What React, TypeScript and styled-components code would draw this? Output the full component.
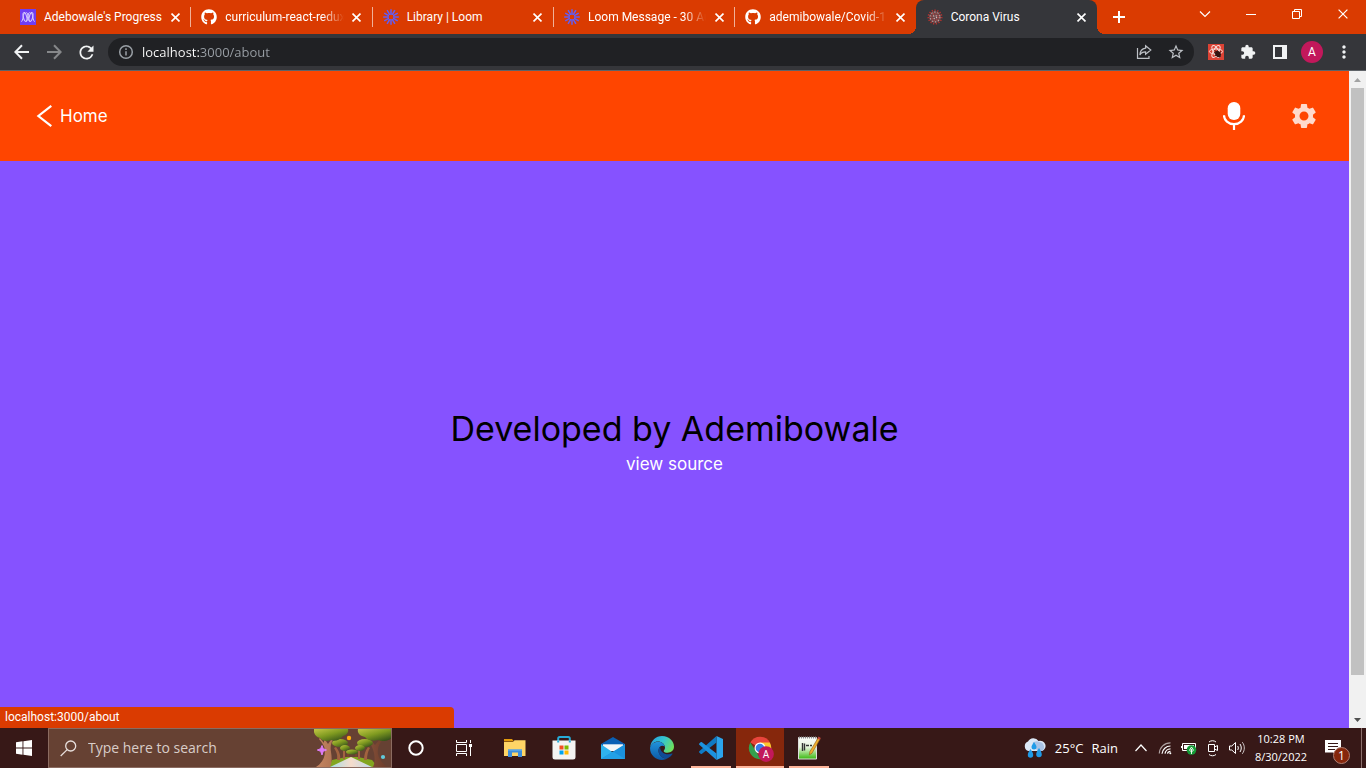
import React from "react";
import styled, { createGlobalStyle, css } from "styled-components";
import { FaGithub } from "react-icons/fa";
import { MdExtension, MdSettings, MdRefresh, MdStarBorder, MdMoreVert } from "react-icons/md";

const ui = `"Open Sans", "Noto Sans", sans-serif`;
const compactUi = `Roboto, "Open Sans", sans-serif`;

const GlobalStyle = createGlobalStyle`
  *, *::before, *::after { box-sizing: border-box; }
  body { margin: 0; font-family: ${ui}; font-size: 12px; }
  button, input { font: inherit; color: inherit; }
  button { padding: 0; border: 0; background: none; cursor: pointer; }
  h1, p { margin: 0; }
  svg { display: block; flex: none; }
`;

const Desktop = styled.div`
  display: flex;
  flex-direction: column;
  min-height: 100vh;
  overflow: hidden;
`;

/* ---------- Browser chrome ---------- */

const TabStrip = styled.header`
  display: flex;
  height: 34px;
  padding-left: 9px;
  background: #da3b01;
  color: #fff;
  font-family: ${compactUi};
`;

const TabList = styled.div`
  display: flex;
  flex: 0 1 1088px;
  min-width: 0;
`;

const Tab = styled.div<{ $active?: boolean; $divided?: boolean }>`
  position: relative;
  display: flex;
  flex: 1 1 0;
  align-items: center;
  min-width: 0;
  padding: 0 7px 0 11px;

  ${(p) =>
    p.$divided &&
    css`
      &::after {
        content: "";
        position: absolute;
        right: -1px;
        top: 7px;
        width: 1px;
        height: 20px;
        background: #f0b199;
      }
    `}

  ${(p) =>
    p.$active &&
    css`
      background: #35363a;
      border-radius: 8px 8px 0 0;

      &::before,
      &::after {
        content: "";
        position: absolute;
        bottom: 0;
        width: 8px;
        height: 8px;
      }
      &::before {
        left: -8px;
        background: radial-gradient(circle at 0 0, transparent 8px, #35363a 8px);
      }
      &::after {
        right: -8px;
        background: radial-gradient(circle at 100% 0, transparent 8px, #35363a 8px);
      }
    `}
`;

const TabButton = styled.button`
  display: flex;
  flex: 1;
  align-items: center;
  gap: 8px;
  min-width: 0;
  margin-right: 5px;
  text-align: left;
`;

const TabTitle = styled.span<{ $fade?: boolean }>`
  flex: 1;
  overflow: hidden;
  line-height: 18px;
  white-space: nowrap;
  ${(p) => p.$fade && "mask-image: linear-gradient(to left, transparent, #000 22px);"}
`;

const IconButton = styled.button<{ $size?: number }>`
  display: grid;
  place-items: center;
  flex: none;
  width: ${(p) => p.$size ?? 32}px;
  height: ${(p) => p.$size ?? 32}px;
`;

const NewTab = styled(IconButton)`
  align-self: center;
  margin-left: 6px;
`;

const WindowControls = styled.div`
  display: flex;
  margin-left: auto;
`;

const WindowButton = styled.button`
  display: grid;
  place-items: center;
  width: 46px;
  height: 28px;
`;

const Toolbar = styled.div`
  display: flex;
  align-items: center;
  height: 37px;
  padding: 0 6px;
  border-bottom: 1px solid #5f6368;
  background: #35363a;
  color: #f1f3f4;
`;

const Omnibox = styled.label`
  display: flex;
  flex: 1;
  align-items: center;
  height: 28px;
  margin: 0 6px;
  padding: 0 2px 0 10px;
  border-radius: 14px;
  background: #202124;
  color: #bdc1c6;
`;

const AddressInput = styled.input`
  flex: 1;
  min-width: 0;
  margin-left: 8px;
  padding: 0;
  border: 0;
  outline: 0;
  background: linear-gradient(to right, #fff 58px, #9aa0a6 58px);
  background-clip: text;
  color: #9aa0a6;
  font-size: 13px;
  line-height: 20px;
  -webkit-text-fill-color: transparent;
`;

const Avatar = styled.span`
  display: grid;
  place-items: center;
  width: 22px;
  height: 22px;
  border-radius: 50%;
  background: #c2185b;
  color: #fff;
  font-family: Roboto, sans-serif;
  font-size: 12px;
`;

/* ---------- Web page ---------- */

const Viewport = styled.div`
  position: relative;
  display: flex;
  flex: 1;
`;

const Page = styled.div`
  display: flex;
  flex: 1;
  flex-direction: column;
  background: #8652ff;
  font-family: Inter, sans-serif;
`;

const PageHeader = styled.header`
  display: flex;
  align-items: center;
  justify-content: space-between;
  height: 90px;
  padding: 0 30px 0 36px;
  background: #ff4500;
  color: #fff;
`;

const HomeLink = styled.a`
  display: flex;
  align-items: center;
  gap: 8px;
  color: inherit;
  font-size: 17px;
  line-height: 24px;
  text-decoration: none;
`;

const HeaderActions = styled.div`
  display: flex;
  align-items: center;
  gap: 40px;
`;

const About = styled.main`
  display: flex;
  flex: 1;
  flex-direction: column;
  align-items: center;
  justify-content: center;
  padding-bottom: 6px;
`;

const Title = styled.h1`
  font-size: 34px;
  font-weight: 400;
  line-height: 44px;
  color: #000;
`;

const SourceLink = styled.a`
  color: #fff;
  font-size: 17px;
  line-height: 26px;
  text-decoration: none;
`;

const StatusBubble = styled.p`
  position: absolute;
  left: 0;
  bottom: 0;
  width: 454px;
  padding: 0 5px;
  border-radius: 0 4px 0 0;
  background: #da3b01;
  color: #fff;
  font-family: ${compactUi};
  line-height: 21px;
`;

const Scrollbar = styled.div`
  display: flex;
  flex-direction: column;
  width: 17px;
  padding: 0 2px;
  background: #f1f1f1;
`;

const ScrollArrow = styled.span<{ $down?: boolean }>`
  display: grid;
  place-items: center;
  height: 17px;
  color: ${(p) => (p.$down ? "#505050" : "#a3a3a3")};
`;

const ScrollThumb = styled.div`
  flex: 587;
  background: #c1c1c1;
`;

const ScrollRest = styled.div`
  flex: 36;
`;

/* ---------- Taskbar ---------- */

const Taskbar = styled.footer`
  display: flex;
  height: 40px;
  background: #371817;
  color: #fff;
`;

const TaskButton = styled.button<{ $state?: "open" | "active" }>`
  position: relative;
  display: grid;
  place-items: center;
  flex: none;
  width: 48px;
  height: 40px;
  background: ${(p) => (p.$state === "active" ? "#86270c" : "none")};

  ${(p) =>
    p.$state &&
    css`
      &::after {
        content: "";
        position: absolute;
        bottom: 0;
        left: ${p.$state === "active" ? 0 : 4}px;
        right: ${p.$state === "active" ? 0 : 4}px;
        height: 2px;
        background: #ffb59b;
      }
    `}
`;

const SearchBox = styled.label`
  display: flex;
  flex: 0 1 344px;
  align-items: center;
  min-width: 0;
  padding-left: 11px;
  border: 1px solid #8b6b60;
  background: #664133;
`;

const SearchInput = styled.input`
  flex: 1;
  min-width: 0;
  margin-left: 11px;
  padding: 0;
  border: 0;
  outline: 0;
  background: none;
  font-size: 14px;
  line-height: 20px;
  &::placeholder { color: #d9cdc9; opacity: 1; }
`;

const PinnedApps = styled.nav`
  display: flex;
  gap: 1px;
  margin-left: 3px;
`;

const Tray = styled.div`
  display: flex;
  align-items: center;
  margin-left: auto;
`;

const Weather = styled.button`
  display: flex;
  align-items: center;
  gap: 8px;
  margin-right: 11px;
  font-size: 13px;
  line-height: 20px;
`;

const TrayButton = styled.button`
  display: grid;
  place-items: center;
  width: 24px;
  height: 40px;
`;

const Clock = styled.button`
  width: 64px;
  font-size: 11px;
  line-height: 18px;
  text-align: center;
`;

const Notifications = styled.button`
  position: relative;
  display: grid;
  place-items: center;
  width: 40px;
  height: 40px;
`;

const Badge = styled.span`
  position: absolute;
  left: 20px;
  top: 19px;
  width: 17px;
  height: 17px;
  border: 1px solid #b08074;
  border-radius: 50%;
  background: #86270c;
  font-size: 12px;
  line-height: 15px;
  text-align: center;
`;

const ShowDesktop = styled.button`
  width: 5px;
  height: 40px;
  margin-left: 8px;
  border-left: 1px solid #8b6f6c;
`;

/* ---------- Drawings ---------- */

const Cross = ({ size = 9, weight = 1.8 }: { size?: number; weight?: number }) => (
  <svg width={size} height={size} viewBox="0 0 10 10" stroke="currentColor" strokeWidth={weight} fill="none">
    <path d="M.6.6 9.4 9.4M9.4.6.6 9.4" />
  </svg>
);

const MicroverseIcon = () => (
  <svg width="16" height="16" viewBox="0 0 16 16">
    <rect width="16" height="16" fill="#6f3df4" />
    <g fill="none" stroke="#d8ccff" strokeWidth="1">
      <ellipse cx="5" cy="8" rx="1.700" ry="4.500" transform="rotate(-14 5 8)" />
      <ellipse cx="11" cy="8" rx="1.700" ry="4.500" transform="rotate(14 11 8)" />
      <path d="M1.300 12.500C3.200 12.800 3 3.500 5 3.500M14.700 12.500C12.800 12.800 13 3.500 11 3.500M6 12.500C8 12 7.500 3.500 9.600 3.500M10 12.500C8 12 8.500 3.500 6.400 3.500" />
    </g>
  </svg>
);

const LoomIcon = () => (
  <svg width="16" height="16" viewBox="0 0 16 16" stroke="#625df5" strokeWidth="1.5">
    {[0, 30, 60, 90, 120, 150, 180, 210, 240, 270, 300, 330].map((a) => (
      <path key={a} d="M8 .2V5.400" transform={`rotate(${a} 8 8)`} />
    ))}
    <circle cx="8" cy="8" r="3" fill="none" strokeWidth="1" />
  </svg>
);

const VirusIcon = () => (
  <svg width="16" height="16" viewBox="0 0 16 16">
    <circle cx="8" cy="8" r="6" fill="#6d4547" />
    <circle cx="8" cy="8" r="6.700" fill="none" stroke="#b3322f" strokeWidth="1.600" strokeDasharray="1.300 1.500" />
    <circle cx="8" cy="8" r="4.900" fill="none" stroke="#b9a3a3" strokeWidth="1.100" strokeDasharray="1.400 1.700" />
    <circle cx="8" cy="8" r="3.300" fill="none" stroke="#c04642" strokeWidth="1.100" strokeDasharray="1.100 1.500" />
    <circle cx="8" cy="8" r="1.600" fill="none" stroke="#d0bcbc" strokeWidth="1.200" strokeDasharray="1 1.500" />
  </svg>
);

const ArrowIcon = ({ flip }: { flip?: boolean }) => (
  <svg width="16" height="16" viewBox="0 0 16 16" fill="none" stroke={flip ? "#86888a" : "#f1f3f4"} strokeWidth="2">
    <path d={flip ? "M1 8h13M8 1.300 14.600 8 8 14.700" : "M15 8H2M8 1.300 1.400 8 8 14.700"} />
  </svg>
);

const InfoIcon = () => (
  <svg width="16" height="16" viewBox="0 0 16 16" fill="none" stroke="#9aa0a6" strokeWidth="1.500">
    <circle cx="8" cy="8" r="6.300" />
    <path d="M8 7.200v4.300M8 4.300v1.600" />
  </svg>
);

const ShareIcon = () => (
  <svg width="16" height="16" viewBox="0 0 16 16" fill="none" stroke="#bdc1c6" strokeWidth="1.200">
    <path d="M1.500 4v10.400H13M13 14.900v-3M9.600 1.700 14.800 6 9.600 10.300V7.900C7 7.900 5 8.800 3.900 11 4 7.300 6 4.700 9.600 4.200z" />
  </svg>
);

const ReactToolIcon = () => (
  <svg width="16" height="16" viewBox="0 0 16 16">
    <rect width="16" height="16" fill="#dc4234" />
    <g fill="none" stroke="#f6dedb" strokeWidth="1">
      <ellipse cx="8" cy="7.500" rx="6.600" ry="2.600" />
      <ellipse cx="8" cy="7.500" rx="6.600" ry="2.600" transform="rotate(60 8 7.500)" />
      <ellipse cx="8" cy="7.500" rx="6.600" ry="2.600" transform="rotate(120 8 7.500)" />
    </g>
    <ellipse cx="10" cy="10" rx="2.600" ry="3.300" transform="rotate(-40 10 10)" fill="#331311" />
    <path d="M6 8.500l7 4M9.500 6.500l2 7M7 12l6-4.500M6.500 6.500l3 2" stroke="#331311" strokeWidth="1" />
  </svg>
);

const SidePanelIcon = () => (
  <svg width="14" height="14" viewBox="0 0 14 14">
    <path fillRule="evenodd" fill="#f1f3f4" d="M0 0h14v14H0zM2 2v10h7V2z" />
  </svg>
);

const BackIcon = () => (
  <svg width="16" height="22" viewBox="0 0 16 22" fill="none" stroke="#fff" strokeWidth="2.200">
    <path d="M15.300.9 2.400 11l12.900 10.100" />
  </svg>
);

const MicIcon = () => (
  <svg width="22" height="28" viewBox="0 0 22 28">
    <rect x="4.700" width="12.600" height="18" rx="6.200" fill="#fff" />
    <path d="M1 13.200a10 9 0 0 0 20 0M11 22v6" fill="none" stroke="#fff" strokeWidth="2.200" />
  </svg>
);

const WindowsIcon = () => (
  <svg width="16" height="16" viewBox="0 0 16 16" fill="#fff">
    <path d="M0 2.200 6.500 1.300v6.200H0zM7.400 1.200 16 0v7.500H7.400zM0 8.400h6.500v6.300L0 13.800zM7.400 8.400H16V16l-8.600-1.200z" />
  </svg>
);

const SearchIcon = () => (
  <svg width="17" height="17" viewBox="0 0 17 17" fill="none" stroke="#e8dfdc" strokeWidth="1.300">
    <circle cx="10.700" cy="6" r="5" />
    <path d="M7.200 9.600.7 16" />
  </svg>
);

const ForestArt = () => (
  <svg width="77" height="38" viewBox="0 0 77 38">
    <defs>
      <linearGradient id="leaf" x1="0" y1="0" x2=".8" y2="1">
        <stop offset="0" stopColor="#c3c746" />
        <stop offset=".5" stopColor="#7f9a20" />
        <stop offset="1" stopColor="#33501a" />
      </linearGradient>
      <linearGradient id="trunk" x1="0" y1="0" x2="1" y2="0">
        <stop offset="0" stopColor="#c58661" />
        <stop offset="1" stopColor="#6d3c2a" />
      </linearGradient>
      <linearGradient id="road" x1="0" y1="0" x2="1" y2="0">
        <stop offset="0" stopColor="#a9dce6" />
        <stop offset=".5" stopColor="#f5dccb" />
        <stop offset="1" stopColor="#bfd9ea" />
      </linearGradient>
    </defs>
    <path d="M15 38 18 31l14-3h12l14 3 6 7z" fill="#83a51f" />
    <path d="M23 31c1-5-1-9-3-12l2-1c3 4 5 8 4 13zM53 31c0-5 1-9 3-12l-2-1c-3 4-4 8-4 13zM29 30v-9h2v9zM46 30v-9h-2v9z" fill="#a2623f" />
    <path d="M34 28v-5M42 28v-5" stroke="#7c462c" strokeWidth="1.500" />
    <path d="M10 9l4 6 5-7 1 1c-3 5-4 8-3 14 1 6 1 11-1 15H2c6-4 9-9 9-16 0-5-3-8-6-12l1-1 4 5zM55 9l6 7 7-8 2 1c-5 6-7 10-6 16 1 5 4 9 9 13H59c2-4 2-9 1-14s-3-9-8-14z" fill="url(#trunk)" />
    <g fill="url(#leaf)">
      <ellipse cx="26" cy="14" rx="8" ry="4" />
      <ellipse cx="51" cy="14" rx="8" ry="4" />
      <ellipse cx="31" cy="19" rx="5" ry="3" />
      <ellipse cx="46" cy="19" rx="5" ry="3" />
      <ellipse cx="38" cy="23" rx="6" ry="2.500" />
      <path d="M0 0h34c1 4-2 6-5 7-3 4-8 6-12 4-4 2-9 1-11-2C2 8-1 4 0 0z" />
      <path d="M44 0h34v9c-4 3-10 4-14 2-5 2-11 0-13-3-5-1-8-4-7-8z" />
    </g>
    <path d="M16 38 37 28l21 10z" fill="url(#road)" />
    <circle cx="35" cy="9" r="2.200" fill="#ffae0d" />
    <circle cx="69" cy="28" r="2.100" fill="#61cbdc" />
    <path d="M8 16.500l1.200 3.200 3.300 1.300-3.300 1.300L8 26l-1.400-3.700L3.300 21l3.300-1.300z" fill="#dd7bf5" stroke="#dd7bf5" />
  </svg>
);

const TaskViewIcon = () => (
  <svg width="16" height="16" viewBox="0 0 16 16" fill="none" stroke="#fff" strokeWidth="1">
    <path d="M.5 4.500h10v7H.5zM.5 0v2.500h10V0M.5 16v-2.500h10V16M14.500 0v3M14.500 7v9" />
    <path d="M13 4h3v3h-3z" fill="#fff" stroke="none" />
  </svg>
);

const ExplorerIcon = () => (
  <svg width="22" height="19" viewBox="0 0 22 19">
    <path d="M0 0h8l2 2.500H0z" fill="#e39b0c" />
    <path d="M0 3h9l1.500-1.800H21.500V17H0z" fill="#ffd566" />
    <path d="M4 10.500h14V18h-4v-4.500H8V18H4z" fill="#3e8edb" />
    <path d="M4 10.500h14v1.200H4z" fill="#62acea" />
  </svg>
);

const StoreIcon = () => (
  <svg width="24" height="24" viewBox="0 0 24 24">
    <path d="M6.200 6V2.500c0-1 .5-1.500 1.500-1.500h8.600c1 0 1.500.5 1.500 1.500V6" fill="none" stroke="#27acd9" strokeWidth="2" />
    <path d="M.5 4.500h23V21a2.500 2.500 0 0 1-2.500 2.500H3A2.500 2.500 0 0 1 .5 21z" fill="#f4f3f2" />
    <path d="M6.200 4.500v2M17.800 4.500v2" stroke="#27acd9" strokeWidth="2" />
    <path d="M7.500 9.500h4v4h-4z" fill="#f25022" />
    <path d="M12.500 9.500h4v4h-4z" fill="#7fba00" />
    <path d="M7.500 14.500h4v4h-4z" fill="#00a4ef" />
    <path d="M12.500 14.500h4v4h-4z" fill="#ffb900" />
  </svg>
);

const MailIcon = () => (
  <svg width="24" height="23" viewBox="0 0 24 23">
    <path d="M0 7 12 0l12 7v4H0z" fill="#0b5fb4" />
    <path d="M2 7.300h20V14H2z" fill="#f5f6f8" />
    <path d="M0 7.300 12 15.500 24 7.300V22H0z" fill="#2fb3ee" />
    <path d="M0 22 24 7.300V22z" fill="#1b91dd" />
    <path d="M0 22 12 14.500 24 22z" fill="#23a0e6" />
  </svg>
);

const EdgeIcon = () => (
  <svg width="24" height="24" viewBox="0 0 24 24">
    <defs>
      <linearGradient id="edgeTop" x1="0" y1=".2" x2="1" y2=".6">
        <stop offset="0" stopColor="#249fe0" />
        <stop offset=".5" stopColor="#35c5cf" />
        <stop offset="1" stopColor="#6fe05a" />
      </linearGradient>
      <linearGradient id="edgeBody" x1="0" y1="0" x2="0" y2="1">
        <stop offset="0" stopColor="#2093dc" />
        <stop offset="1" stopColor="#0c59a6" />
      </linearGradient>
    </defs>
    <path d="M.2 11C1 4.500 6 0 12 0c7.500 0 12 5.500 12 10.500 0 4-3 6.200-6.500 6.200-2.500 0-3.800-.9-3.800-1.800 0-.7 1.300-1.200 1.300-3.200C15 8 11.500 5.500 8 5.500c-4 0-6.500 2.500-7.800 5.500z" fill="url(#edgeTop)" />
    <path d="M.1 11.500C1 8 4.500 5.700 8 5.700c3.500 0 6 1.900 6.800 4.800C12 8.500 8.500 10.500 8.500 14.500c0 4 3.500 8.500 9 7.800C16 23.400 14 24 12 24 5 24-.5 18 .1 11.500z" fill="url(#edgeBody)" />
    <path d="M10.200 11c-1.200 1-1.700 2.300-1.700 3.700 0 4.300 4 8.200 9.300 7.500 2-1 3.600-2.400 4.700-4.200.3-.5-.1-.8-.6-.5-5 2.300-12-.5-11.700-6.500z" fill="#0f4c96" />
  </svg>
);

const CodeIcon = () => (
  <svg width="24" height="24" viewBox="0 0 24 24">
    <path d="M17.500 0 24 3v18l-6.500 3z" fill="#2ba4ec" />
    <path d="M17.500 0v6.500L3 17.800c-.5.4-1 .3-1.400 0l-1.300-1.200c-.5-.5-.4-1 0-1.400z" fill="#0f7ac4" />
    <path d="M17.500 24v-6.500L3 6.200c-.5-.4-1-.3-1.400 0L.3 7.400c-.5.5-.4 1 0 1.400z" fill="#1c92de" />
  </svg>
);

const ChromeIcon = () => (
  <svg width="28" height="28" viewBox="-2.500 -2.500 28 28">
    <path d="M11.500 11.500 1.800 6A11.200 11.200 0 0 1 21.400 6z" fill="#e8453c" />
    <path d="M1.800 6 8 15.500l4 7.200A11.200 11.200 0 0 1 1.800 6z" fill="#34a04e" />
    <path d="M11.500 6h9.800a11.200 11.200 0 0 1-9.300 16.800l5-8z" fill="#fcc62f" />
    <circle cx="11.500" cy="11.500" r="5.500" fill="#fff" />
    <circle cx="11.500" cy="11.500" r="4.300" fill="#3c7be8" />
    <circle cx="17.600" cy="17.600" r="7.800" fill="#c2185b" />
    <text x="17.600" y="21.300" textAnchor="middle" fontFamily="Roboto, sans-serif" fontSize="10" fill="#fff">
      A
    </text>
  </svg>
);

const NotepadIcon = () => (
  <svg width="24" height="24" viewBox="0 0 24 24">
    <defs>
      <linearGradient id="pad" x1="0" y1="0" x2="0" y2="1">
        <stop offset="0" stopColor="#fafafa" />
        <stop offset=".45" stopColor="#e8f7dc" />
        <stop offset="1" stopColor="#38b80f" />
      </linearGradient>
    </defs>
    <path d="M1.500 1.500h18v21.500h-18z" fill="url(#pad)" stroke="#dedede" strokeWidth="1" />
    <path d="M2 1.500h17" stroke="#888" strokeWidth="2" strokeDasharray="1 1" />
    <path d="M5.500 7v8M7.500 7.500v7M9 9.500h3M13 9.500h2" stroke="#333" strokeWidth="1.400" />
    <path d="m21 2 2 1.200-8 14-2.600 1.600.4-3z" fill="#f0ae2c" stroke="#8a5a17" strokeWidth=".6" />
    <path d="m20.600 2.600.9-2 2.300 1.300-1 2z" fill="#c0473c" />
  </svg>
);

const RainIcon = () => (
  <svg width="24" height="20" viewBox="0 0 23 20">
    <path d="M5 13a5 5 0 0 1-.5-9.500A6 6 0 0 1 15 3a5 5 0 0 1 3.500 10z" fill="#dce8f6" />
    <path d="M9 5a6 6 0 0 1 7-1 5 5 0 0 1 2.500 9H14z" fill="#a9c3e6" />
    <g fill="#1f9be8">
      <path d="M10.500 4c2 3 2.500 4 2.500 5a2.500 2.500 0 0 1-5 0c0-1 .5-2 2.500-5zM7 11c2 3 2.700 4.500 2.700 6a2.700 2.700 0 0 1-5.400 0c0-1.500.7-3 2.700-6zM15.500 10c2 3 2.800 5 2.800 6.500a2.800 2.800 0 0 1-5.600 0c0-1.500.8-3.500 2.800-6.500z" />
    </g>
  </svg>
);

const Chevron = ({ down }: { down?: boolean }) => (
  <svg width="12" height="8" viewBox="0 0 12 8" fill="none" stroke="#fff" strokeWidth="1.200">
    <path d={down ? "M1 1.500l5 5 5-5" : "M.5 7 6 1l5.500 6"} />
  </svg>
);

const WifiIcon = () => (
  <svg width="14" height="14" viewBox="0 0 14 14" fill="none" stroke="#fff" strokeWidth="1.200">
    <path d="M1.300 12.500A11 11 0 0 1 12.500 1.800" opacity=".6" />
    <path d="M4 12.700A8.500 8.500 0 0 1 12.500 5M7 12.700a5.500 5.500 0 0 1 5.500-4.800M9.500 12.700a3 3 0 0 1 3-2.400" />
    <circle cx="12.300" cy="12.300" r="1" fill="#fff" stroke="none" />
  </svg>
);

const BatteryIcon = () => (
  <svg width="16" height="13" viewBox="0 0 16 13">
    <path d="M1.500 1.500h13v7h-13zM.5 4v2" fill="none" stroke="#fff" />
    <path d="M3 3h10v4H3z" fill="#fff" />
    <circle cx="10.500" cy="8" r="4.800" fill="#149b36" />
    <path d="M8.500 8.300 10.500 5l2 3.300-2 1.500zM10.500 7v5" stroke="#fff" strokeWidth=".9" fill="none" />
  </svg>
);

const CameraIcon = () => (
  <svg width="12" height="17" viewBox="0 0 12 17" fill="none" stroke="#fff" strokeWidth="1">
    <path d="M1.500 4.500h6v7h-6zM7.500 7l3-1.500v5L7.500 9M2 2C4 .3 7 .3 9 2M2 14.500c2 1.700 5 1.700 7 0" />
  </svg>
);

const VolumeIcon = () => (
  <svg width="17" height="14" viewBox="0 0 17 14" fill="none" stroke="#fff" strokeWidth="1">
    <path d="M.5 5h2.300L6.500 1.500v11L2.800 9H.5zM8.700 5c.8 1.300.8 2.700 0 4M11 3c1.700 2.500 1.700 5.500 0 8" />
    <path d="M13.300 1.200c2.700 3.500 2.700 8 0 11.600" opacity=".75" />
  </svg>
);

const NoteIcon = () => (
  <svg width="16" height="16" viewBox="0 0 16 16">
    <path d="M0 0h16v12.500h-4V16l-4-3.500H0z" fill="#fff" />
    <path d="M3 3.500h10M3 6.500h10M3 9.500h7" stroke="#371817" strokeWidth="1" />
  </svg>
);

/* ---------- Data and screen ---------- */

const tabs = [
  { title: "Adebowale's Progress", icon: <MicroverseIcon />, divided: true },
  { title: "curriculum-react-redux", icon: <FaGithub size={16} />, divided: true, fade: true },
  { title: "Library | Loom", icon: <LoomIcon />, divided: true },
  { title: "Loom Message - 30 Au", icon: <LoomIcon />, divided: true, fade: true },
  { title: "ademibowale/Covid-1", icon: <FaGithub size={16} />, fade: true },
  { title: "Corona Virus", icon: <VirusIcon />, active: true },
];

const apps: { name: string; icon: React.ReactNode; state?: "open" | "active" }[] = [
  { name: "File Explorer", icon: <ExplorerIcon /> },
  { name: "Store", icon: <StoreIcon /> },
  { name: "Mail", icon: <MailIcon /> },
  { name: "Edge", icon: <EdgeIcon /> },
  { name: "Visual Studio Code", icon: <CodeIcon />, state: "open" },
  { name: "Chrome", icon: <ChromeIcon />, state: "active" },
  { name: "Notepad++", icon: <NotepadIcon />, state: "open" },
];

export default function App() {
  return (
    <Desktop>
      <GlobalStyle />
      <TabStrip>
        <TabList>
          {tabs.map((t) => (
            <Tab key={t.title} $active={t.active} $divided={t.divided}>
              <TabButton>
                {t.icon}
                <TabTitle $fade={t.fade}>{t.title}</TabTitle>
              </TabButton>
              <IconButton $size={16} aria-label="Close tab">
                <Cross />
              </IconButton>
            </Tab>
          ))}
        </TabList>
        <NewTab aria-label="New tab">
          <svg width="12" height="12" viewBox="0 0 12 12" stroke="#fff" strokeWidth="2">
            <path d="M6 0v12M0 6h12" />
          </svg>
        </NewTab>
        <WindowControls>
          <WindowButton aria-label="Search tabs">
            <Chevron down />
          </WindowButton>
          <WindowButton aria-label="Minimize">
            <svg width="10" height="2" viewBox="0 0 10 2" fill="#fff">
              <path d="M0 1h10v1H0z" />
            </svg>
          </WindowButton>
          <WindowButton aria-label="Restore">
            <svg width="10" height="10" viewBox="0 0 10 10" fill="none" stroke="#fff">
              <path d="M.5 2.500h7v7h-7zM2.500 2.500v-2h7v7h-2" />
            </svg>
          </WindowButton>
          <WindowButton aria-label="Close">
            <Cross size={10} weight={1.2} />
          </WindowButton>
        </WindowControls>
      </TabStrip>

      <Toolbar>
        <IconButton aria-label="Back">
          <ArrowIcon />
        </IconButton>
        <IconButton aria-label="Forward">
          <ArrowIcon flip />
        </IconButton>
        <IconButton aria-label="Reload">
          <MdRefresh size={21} />
        </IconButton>
        <Omnibox>
          <InfoIcon />
          <AddressInput aria-label="Address" defaultValue="localhost:3000/about" />
          <IconButton aria-label="Share">
            <ShareIcon />
          </IconButton>
          <IconButton aria-label="Bookmark">
            <MdStarBorder size={18} />
          </IconButton>
        </Omnibox>
        <IconButton aria-label="React tools">
          <ReactToolIcon />
        </IconButton>
        <IconButton aria-label="Extensions">
          <MdExtension size={16} />
        </IconButton>
        <IconButton aria-label="Side panel">
          <SidePanelIcon />
        </IconButton>
        <IconButton aria-label="Profile">
          <Avatar>A</Avatar>
        </IconButton>
        <IconButton aria-label="Menu">
          <MdMoreVert size={20} />
        </IconButton>
      </Toolbar>

      <Viewport>
        <Page>
          <PageHeader>
            <HomeLink href="#home">
              <BackIcon />
              Home
            </HomeLink>
            <HeaderActions>
              <IconButton $size={30} aria-label="Voice">
                <MicIcon />
              </IconButton>
              <IconButton $size={30} aria-label="Settings">
                <MdSettings size={30} color="#ffdacc" />
              </IconButton>
            </HeaderActions>
          </PageHeader>
          <About>
            <Title>Developed by Ademibowale</Title>
            <SourceLink href="#source">view source</SourceLink>
          </About>
        </Page>
        <Scrollbar>
          <ScrollArrow>
            <svg width="7" height="4" viewBox="0 0 7 4" fill="currentColor">
              <path d="M0 4 3.500 0 7 4z" />
            </svg>
          </ScrollArrow>
          <ScrollThumb />
          <ScrollRest />
          <ScrollArrow $down>
            <svg width="7" height="4" viewBox="0 0 7 4" fill="currentColor">
              <path d="M0 0h7L3.500 4z" />
            </svg>
          </ScrollArrow>
        </Scrollbar>
        <StatusBubble>localhost:3000/about</StatusBubble>
      </Viewport>

      <Taskbar>
        <TaskButton aria-label="Start">
          <WindowsIcon />
        </TaskButton>
        <SearchBox>
          <SearchIcon />
          <SearchInput aria-label="Search" placeholder="Type here to search" />
          <ForestArt />
        </SearchBox>
        <TaskButton aria-label="Cortana">
          <svg width="16" height="16" viewBox="0 0 16 16" fill="none" stroke="#fff" strokeWidth="2">
            <circle cx="8" cy="8" r="6.700" />
          </svg>
        </TaskButton>
        <TaskButton aria-label="Task view">
          <TaskViewIcon />
        </TaskButton>
        <PinnedApps>
          {apps.map((a) => (
            <TaskButton key={a.name} aria-label={a.name} $state={a.state}>
              {a.icon}
            </TaskButton>
          ))}
        </PinnedApps>
        <Tray>
          <Weather>
            <RainIcon />
            <span>25°C</span>
            <span>Rain</span>
          </Weather>
          <TrayButton aria-label="Show hidden icons">
            <Chevron />
          </TrayButton>
          <TrayButton aria-label="Network">
            <WifiIcon />
          </TrayButton>
          <TrayButton aria-label="Battery">
            <BatteryIcon />
          </TrayButton>
          <TrayButton aria-label="Camera">
            <CameraIcon />
          </TrayButton>
          <TrayButton aria-label="Volume">
            <VolumeIcon />
          </TrayButton>
          <Clock>
            10:28 PM
            <br />
            8/30/2022
          </Clock>
          <Notifications aria-label="Notifications">
            <NoteIcon />
            <Badge>1</Badge>
          </Notifications>
          <ShowDesktop aria-label="Show desktop" />
        </Tray>
      </Taskbar>
    </Desktop>
  );
}
